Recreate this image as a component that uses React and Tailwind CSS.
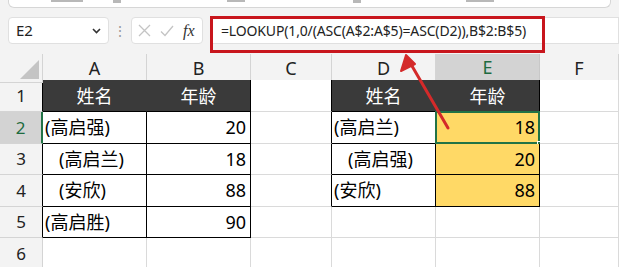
import React from 'react';

const cols = ['A', 'B', 'C', 'D', 'E', 'F'];
const grid = 'grid grid-cols-[43px_104px_104px_81px_104px_104px_79px]';

const rows = [
  { n: 1, cells: [{ t: '姓名', dark: true }, { t: '年龄', dark: true }, {}, { t: '姓名', dark: true }, { t: '年龄', dark: true }, {}] },
  { n: 2, cells: [{ t: '(高启强)', box: true }, { t: '20', num: true, box: true }, {}, { t: '(高启兰)', box: true }, { t: '18', num: true, box: true, fill: true, sel: true }, {}] },
  { n: 3, cells: [{ t: '   (高启兰)', box: true }, { t: '18', num: true, box: true }, {}, { t: '   (高启强)', box: true }, { t: '20', num: true, box: true, fill: true }, {}] },
  { n: 4, cells: [{ t: '   (安欣)', box: true }, { t: '88', num: true, box: true }, {}, { t: '(安欣)', box: true }, { t: '88', num: true, box: true, fill: true }, {}] },
  { n: 5, cells: [{ t: '(高启胜)', box: true }, { t: '90', num: true, box: true }, {}, {}, {}, {}] },
  { n: 6, cells: [{}, {}, {}, {}, {}, {}] },
];

function Cell({ c, rowIdx, colIdx }) {
  // black border on right if this cell is in a table, or the next one is
  const next = rows[rowIdx].cells[colIdx + 1];
  const below = rows[rowIdx + 1] ? rows[rowIdx + 1].cells[colIdx] : null;
  const inTable = c.box || c.dark;
  const rightBlack = inTable || (next && (next.box || next.dark));
  const darkBorder = c.dark && next && next.dark;
  return (
    <div
      className={[
        'relative h-full flex items-center border-r border-b whitespace-pre',
        darkBorder ? 'border-r-[#3a3a3a]' : rightBlack ? 'border-r-black' : 'border-r-[#dadada]',
        inTable ? 'border-b-black' : below && below.dark ? 'border-b-black' : 'border-b-[#dadada]',
        c.dark ? 'bg-[#3a3a3a] text-white justify-center' : c.fill ? 'bg-[#ffd966] text-black' : 'bg-white text-black',
        c.num ? 'justify-end pr-[4px]' : c.dark ? '' : 'pl-[2px]',
      ].join(' ')}
    >
      <span className="leading-none">{c.t}</span>
      {c.sel && (
        <>
          <div className="absolute -left-[1px] -top-[1px] -right-[1px] -bottom-[1px] border-2 border-[#217346]" />
          <div className="absolute -right-[4px] -bottom-[4px] w-[6px] h-[6px] bg-[#217346] border border-white" />
        </>
      )}
    </div>
  );
}

export default function App() {
  return (
    <div
      className="relative w-[619px] h-[267px] overflow-hidden bg-[#f3f3f3] text-[#222]"
      style={{ fontFamily: '"Noto Sans", "Noto Sans CJK SC", sans-serif' }}
    >
      {/* ribbon remnant */}
      <div className="mx-[8px] h-[8px] bg-white border border-t-0 border-[#d6d6d6] rounded-b-[6px] relative">
        <div className="absolute top-0 left-[42px] w-[32px] h-[2px] bg-[#b8b8b8]" />
        <div className="absolute top-0 left-[104px] w-[8px] h-[3px] bg-[#b8b8b8]" />
        <div className="absolute top-0 left-[218px] w-[18px] h-[2px] bg-[#b8b8b8]" />
        <div className="absolute top-0 left-[344px] w-[8px] h-[3px] bg-[#b8b8b8]" />
        <div className="absolute top-0 left-[457px] w-[28px] h-[2px] bg-[#b8b8b8]" />
      </div>

      {/* formula bar */}
      <div className="flex items-center mt-[9px] h-[27px]">
        <div className="ml-[8px] w-[101px] h-full bg-white border border-[#e0e0e0] rounded-[4px] flex items-center justify-between pl-[7px] pr-[7px] text-[15px]">
          <span>E2</span>
          <svg width="9" height="6" viewBox="0 0 9 6"><path d="M1 1l3.5 3.5L8 1" fill="none" stroke="#333" strokeWidth="1.6" /></svg>
        </div>
        <div className="w-[22px] flex justify-center text-[#9a9a9a] text-[14px]">⋮</div>
        <div className="w-[72px] h-full bg-white border border-[#e0e0e0] rounded-[4px] flex items-center px-[6px] gap-[9px]">
          <svg width="13" height="13" viewBox="0 0 13 13"><path d="M1 1l11 11M12 1L1 12" stroke="#c4c4c4" strokeWidth="1.3" /></svg>
          <svg width="14" height="12" viewBox="0 0 14 12"><path d="M1 6.5l4 4L13 1" fill="none" stroke="#c4c4c4" strokeWidth="1.3" /></svg>
          <span className="italic text-[16px] text-[#333]" style={{ fontFamily: '"Liberation Serif", serif' }}>fx</span>
        </div>
        <div className="ml-[8px] flex-1 h-full bg-white border border-[#e0e0e0] flex items-center pl-[9px] text-[14px] tracking-[-0.15px]">
          =LOOKUP(1,0/(ASC(A$2:A$5)=ASC(D2)),B$2:B$5)
        </div>
      </div>

      {/* sheet */}
      <div className="mt-[10px]">
        <div className={`${grid} h-[26px]`}>
          <div className="relative bg-[#f3f3f3] border-r border-b border-[#d4d4d4]">
            <svg className="absolute right-[3px] bottom-[3px]" width="19" height="19" viewBox="0 0 19 19"><path d="M19 0V19H0Z" fill="#c4c4c4" /></svg>
          </div>
          {cols.map((c) => (
            <div
              key={c}
              className={[
                'flex items-center justify-center text-[18px] border-r',
                c === 'E' ? 'bg-[#d3d3d3] text-[#1e6b40] border-b-2 border-b-[#217346] border-r-[#c8c8c8]' : 'bg-[#f3f3f3] border-b border-[#d4d4d4] text-[#222]',
              ].join(' ')}
            >
              {c}
            </div>
          ))}
        </div>
        {rows.map((r, ri) => (
          <div key={r.n} className={`${grid} ${ri === 0 ? 'h-[32px]' : 'h-[31.6px]'} text-[18px]`}>
            <div
              className={[
                'flex items-center justify-center border-b border-[#d4d4d4] text-[17px]',
                r.n === 2 ? 'bg-[#d3d3d3] text-[#1e6b40] border-r-2 border-r-[#217346]' : 'bg-[#f3f3f3] text-[#222] border-r',
                r.n <= 5 && r.n !== 2 ? 'border-r-black' : '',
              ].join(' ')}
            >
              {r.n}
            </div>
            {r.cells.map((c, ci) => (
              <Cell key={ci} c={c} rowIdx={ri} colIdx={ci} />
            ))}
          </div>
        ))}
      </div>

      {/* annotation */}
      <div className="absolute left-[210px] top-[16px] w-[335px] h-[37px] border-[3px] border-[#c8161d]" />
      <svg className="absolute left-0 top-0 pointer-events-none" width="619" height="267" viewBox="0 0 619 267">
        <line x1="448" y1="128" x2="412" y2="66" stroke="#d42a2a" strokeWidth="3" strokeLinecap="round" />
        <path d="M406 55L401 71L415 64Z" fill="#d42a2a" stroke="#d42a2a" strokeWidth="2" strokeLinejoin="round" />
      </svg>
    </div>
  );
}
